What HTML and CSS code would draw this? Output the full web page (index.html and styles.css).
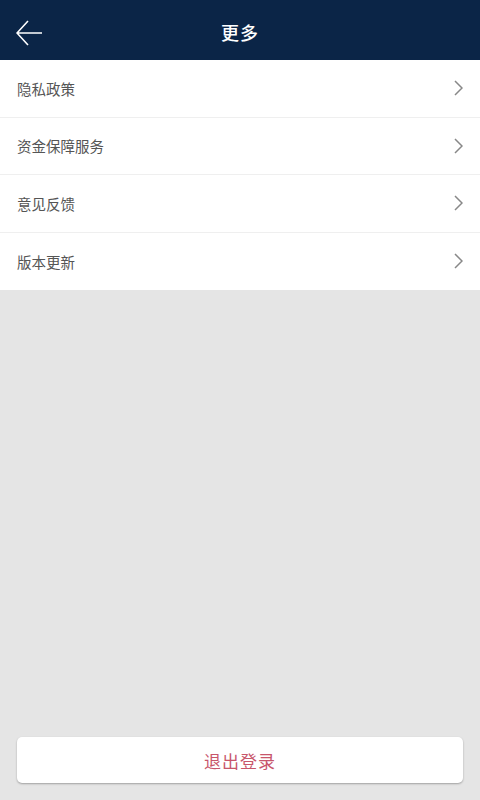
FILE: index.html
```html
<!DOCTYPE html>
<html lang="zh">
<head>
<meta charset="utf-8">
<link rel="stylesheet" href="styles.css">
</head>
<body>
<div class="app">
  <header class="topbar">
    <span class="back">
      <svg width="26" height="26" viewBox="0 0 26 26"><path d="M12 1 L1 13 L12 25 M1 13 H26" fill="none" stroke="#fff" stroke-width="1.6"/></svg>
    </span>
    <h1 class="title">更多</h1>
  </header>
  <ul class="menu">
    <li class="item"><span>隐私政策</span><svg class="chev" width="9" height="16" viewBox="0 0 9 16"><path d="M1 1 L8 8 L1 15" fill="none" stroke="#888" stroke-width="1.5"/></svg></li>
    <li class="item"><span>资金保障服务</span><svg class="chev" width="9" height="16" viewBox="0 0 9 16"><path d="M1 1 L8 8 L1 15" fill="none" stroke="#888" stroke-width="1.5"/></svg></li>
    <li class="item"><span>意见反馈</span><svg class="chev" width="9" height="16" viewBox="0 0 9 16"><path d="M1 1 L8 8 L1 15" fill="none" stroke="#888" stroke-width="1.5"/></svg></li>
    <li class="item"><span>版本更新</span><svg class="chev" width="9" height="16" viewBox="0 0 9 16"><path d="M1 1 L8 8 L1 15" fill="none" stroke="#888" stroke-width="1.5"/></svg></li>
  </ul>
  <div class="spacer"></div>
  <div class="footer">
    <button class="logout">退出登录</button>
  </div>
</div>
</body>
</html>
```
FILE: styles.css
```css
* { box-sizing: border-box; }
html, body { margin: 0; padding: 0; }
body {
  font-family: "Noto Sans CJK SC", "Noto Sans", sans-serif;
  background: #e5e5e5;
}
.app {
  width: 480px;
  height: 800px;
  display: flex;
  flex-direction: column;
}
.topbar {
  height: 60px;
  padding-top: 4px;
  background: #0b2547;
  display: flex;
  align-items: center;
  justify-content: center;
  position: relative;
  flex-shrink: 0;
}
.back {
  position: absolute;
  left: 16px;
  top: 20px;
  width: 26px;
  height: 26px;
  display: flex;
}
.title {
  margin: 0;
  color: #fff;
  font-size: 18px;
  font-weight: 500;
  letter-spacing: 1px;
}
.menu {
  list-style: none;
  margin: 0;
  padding: 0;
  background: #fff;
}
.item {
  height: 57.5px;
  display: flex;
  align-items: center;
  justify-content: space-between;
  padding: 0 17px 0 17px;
  font-size: 14.5px;
  color: #555;
  border-bottom: 1px solid #efefef;
}
.item:last-child { border-bottom: none; }
.chev { margin-right: 0; }
.spacer { flex: 1; }
.footer {
  padding: 0 17px 17px;
}
.logout {
  width: 100%;
  height: 46px;
  border: none;
  background: #fff;
  border-radius: 5px;
  box-shadow: 0 1px 2px rgba(0,0,0,0.3);
  color: #c8566b;
  font-family: "Noto Sans CJK SC", sans-serif;
  font-size: 17px;
  letter-spacing: 1px;
}
```
